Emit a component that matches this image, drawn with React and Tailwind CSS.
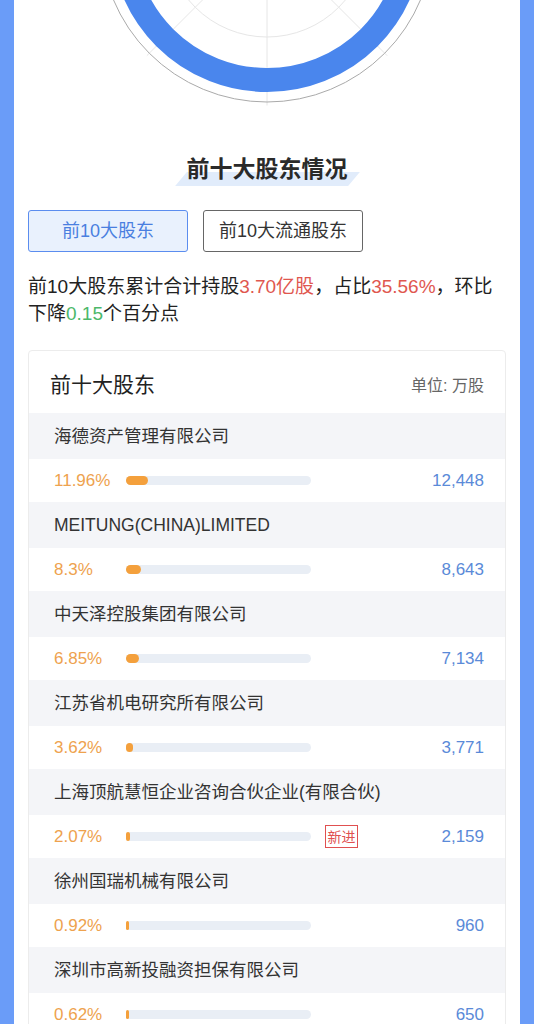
import React from "react";

const rows = [
  { name: "海德资产管理有限公司", pct: "11.96%", p: 11.96, num: "12,448" },
  { name: "MEITUNG(CHINA)LIMITED", pct: "8.3%", p: 8.3, num: "8,643" },
  { name: "中天泽控股集团有限公司", pct: "6.85%", p: 6.85, num: "7,134" },
  { name: "江苏省机电研究所有限公司", pct: "3.62%", p: 3.62, num: "3,771" },
  { name: "上海顶航慧恒企业咨询合伙企业(有限合伙)", pct: "2.07%", p: 2.07, num: "2,159", isNew: true },
  { name: "徐州国瑞机械有限公司", pct: "0.92%", p: 0.92, num: "960" },
  { name: "深圳市高新投融资担保有限公司", pct: "0.62%", p: 0.62, num: "650" },
  { name: "香港中央结算有限公司", pct: "0.45%", p: 0.45, num: "472" },
];

function Chart() {
  const cx = 253;
  const cy = -64.5;
  const angles = [0, 45, 90, 135, 180, 225, 270, 315];
  return (
    <svg width="506" height="108" className="block">
      {angles.map((a) => {
        const r = 170;
        const rad = (a * Math.PI) / 180;
        return (
          <line
            key={a}
            x1={cx}
            y1={cy}
            x2={cx + r * Math.cos(rad)}
            y2={cy + r * Math.sin(rad)}
            stroke="#e6e6e6"
            strokeWidth="1"
          />
        );
      })}
      <circle cx={cx} cy={cy} r="101.5" fill="none" stroke="#e6e6e6" strokeWidth="1" />
      <circle cx={cx} cy={cy} r="144.5" fill="none" stroke="#4a86ed" strokeWidth="24" />
      <circle cx={cx} cy={cy} r="166.5" fill="none" stroke="#aaaaaa" strokeWidth="1" />
    </svg>
  );
}

export default function App() {
  return (
    <div className="h-[1024px] overflow-hidden bg-[#6a9cf8] px-[14px] font-['Liberation_Sans','Noto_Sans_CJK_SC',sans-serif]">
      <div className="min-h-full bg-white px-[14px]">
        <div className="-mx-[14px]">
          <Chart />
        </div>

        <div className="mt-[44px] flex justify-center">
          <div className="relative inline-block">
            <span className="absolute left-[-6px] right-[-6px] top-[20px] h-[14px] -skew-x-[40deg] bg-[#e1ecfb]" />
            <h2 className="relative text-[23px] font-bold leading-[30px] text-[#2a2a2a] font-['Noto_Sans_CJK_SC',sans-serif]">
              前十大股东情况
            </h2>
          </div>
        </div>

        <div className="mt-[28px] flex gap-[15px]">
          <button className="flex h-[42px] w-[160px] items-center justify-center rounded-[3px] border border-[#5b8def] bg-[#e9f1fd] text-[18px] text-[#4a7fe0]">
            前10大股东
          </button>
          <button className="flex h-[42px] w-[160px] items-center justify-center rounded-[3px] border border-[#666666] bg-white text-[18px] text-[#333333]">
            前10大流通股东
          </button>
        </div>

        <p className="mt-[21px] text-[19px] leading-[27px] text-[#222222]">
          <span className="whitespace-nowrap">
            前10大股东累计合计持股<span className="text-[#e0574f]">3.70亿股</span>，占比
            <span className="text-[#e0574f]">35.56%</span>，环比
          </span>
          <br />
          下降<span className="text-[#4cb86a]">0.15</span>个百分点
        </p>

        <div className="mt-[23px] rounded-[4px] border border-[#ececec]">
          <div className="flex h-[62px] items-end justify-between px-[21px] pb-[14px]">
            <span className="text-[21px] leading-[28px] text-[#222222]">前十大股东</span>
            <span className="pb-[1px] text-[16px] leading-[24px] text-[#666666]">单位: 万股</span>
          </div>
          {rows.map((r) => (
            <div key={r.name}>
              <div className="flex h-[46px] items-center bg-[#f4f5f8] px-[25px] text-[17.5px] text-[#333333]">
                {r.name}
              </div>
              <div className="flex h-[43px] items-center bg-white pl-[25px] pr-[21px]">
                <span className="w-[72px] text-[17px] text-[#eea24e]">{r.pct}</span>
                <div className="h-[9px] w-[185px] rounded-full bg-[#e9eef5]">
                  <div
                    className="h-full rounded-full bg-[#f4a03c]"
                    style={{ width: `${Math.max((r.p / 100) * 185, 2.5)}px` }}
                  />
                </div>
                {r.isNew && (
                  <span className="ml-[14px] flex h-[23px] w-[33px] items-center justify-center border border-[#e05050] text-[14px] leading-none text-[#e05050]">
                    新进
                  </span>
                )}
                <span className="ml-auto text-[17px] text-[#5a8ad8]">{r.num}</span>
              </div>
            </div>
          ))}
        </div>
      </div>
    </div>
  );
}
